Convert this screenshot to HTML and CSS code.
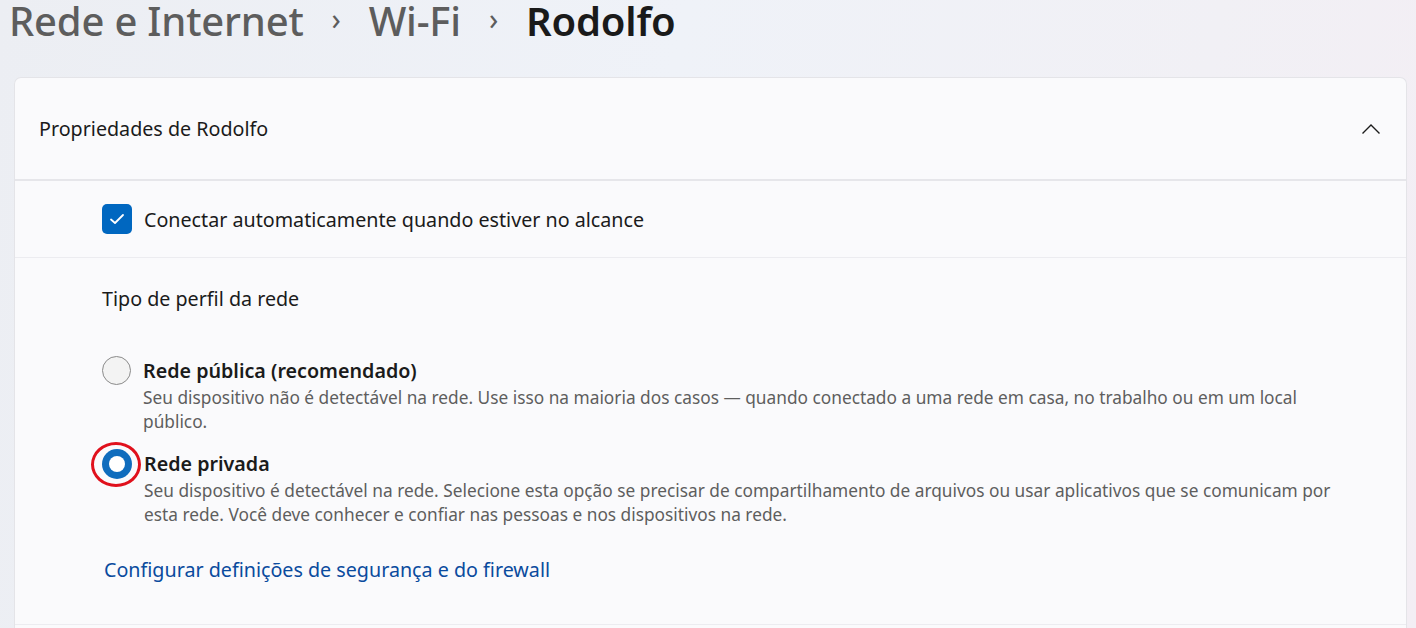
FILE: index.html
```html
<!DOCTYPE html>
<html lang="pt-BR">
<head>
    <meta charset="UTF-8">
    <title>Rodolfo</title>
    <link rel="stylesheet" href="styles.css">
</head>
<body>
    <h1 class="crumbs">
        <span class="crumb">Rede e Internet</span>
        <span class="sep">&#8250;</span>
        <span class="crumb">Wi-Fi</span>
        <span class="sep">&#8250;</span>
        <span class="crumb current">Rodolfo</span>
    </h1>
    <div class="card">
        <div class="card-header">
            <span>Propriedades de Rodolfo</span>
            <svg class="chevron" width="20" height="12" viewBox="0 0 20 12">
                <path d="M1.5 10.5 L10 2 L18.5 10.5" fill="none" stroke="#1b1b1b" stroke-width="1.4"/>
            </svg>
        </div>
        <div class="row">
            <label class="check">
                <span class="box">
                    <svg width="16" height="12" viewBox="0 0 16 12">
                        <path d="M2 6.5 L6 10 L14 2" fill="none" stroke="#fff" stroke-width="1.8" stroke-linecap="round" stroke-linejoin="round"/>
                    </svg>
                </span>
                Conectar automaticamente quando estiver no alcance
            </label>
        </div>
        <div class="row profile">
            <div class="section-title">Tipo de perfil da rede</div>
            <div class="option">
                <span class="radio"></span>
                <div class="option-text">
                    <div class="option-label">Rede pública (recomendado)</div>
                    <div class="option-desc">Seu dispositivo não é detectável na rede. Use isso na maioria dos casos — quando conectado a uma rede em casa, no trabalho ou em um local público.</div>
                </div>
            </div>
            <div class="option">
                <span class="radio checked"><span class="mark"></span></span>
                <div class="option-text">
                    <div class="option-label">Rede privada</div>
                    <div class="option-desc">Seu dispositivo é detectável na rede. Selecione esta opção se precisar de compartilhamento de arquivos ou usar aplicativos que se comunicam por esta rede. Você deve conhecer e confiar nas pessoas e nos dispositivos na rede.</div>
                </div>
            </div>
            <a class="link" href="#">Configurar definições de segurança e do firewall</a>
        </div>
    </div>
</body>
</html>
```

FILE: styles.css
```css
body {
    margin: 0;
    height: 628px;
    overflow: hidden;
    font-family: "Noto Sans", "Open Sans", sans-serif;
    color: #1b1b1b;
    background: linear-gradient(100deg, #eceef3 0%, #eff2f8 45%, #f1f0f5 80%, #f3eef4 100%);
}
.crumbs {
    margin: 0;
    padding: 0 0 0 9px;
    height: 77px;
    display: flex;
    align-items: flex-start;
    font-size: 40px;
    font-weight: 500;
    line-height: 42px;
    color: #5d5d5d;
    letter-spacing: -0.2px;
}
.crumbs .sep {
    font-size: 30px;
    font-weight: 400;
    color: #5d5d5d;
    margin: -2px 28px 0 28px;
}
.crumbs .current {
    color: #1a1a1a;
    font-weight: 600;
}
.card {
    margin: 0 9px 0 14px;
    background: #fafafc;
    border: 1px solid #e4e4e8;
    border-bottom: none;
    border-radius: 7px 7px 0 0;
    height: 560px;
}
.card-header {
    height: 101px;
    padding: 0 25px 0 24px;
    display: flex;
    align-items: center;
    justify-content: space-between;
    font-size: 19.7px;
    border-bottom: 2px solid #e6e6ea;
}
.row {
    padding: 0 50px 0 87px;
    border-bottom: 1px solid #ececf0;
}
.check {
    height: 76px;
    display: flex;
    align-items: center;
    gap: 12px;
    font-size: 19.7px;
}
.box {
    width: 30px;
    height: 30px;
    border-radius: 5px;
    background: #0067c0;
    display: flex;
    align-items: center;
    justify-content: center;
}
.profile {
    height: 367px;
    box-sizing: border-box;
    padding-top: 27px;
}
.section-title {
    font-size: 19.7px;
    margin-bottom: 44px;
}
.option {
    display: flex;
    gap: 12px;
    align-items: flex-start;
    margin-bottom: 15px;
}
.radio {
    position: relative;
    width: 27px;
    height: 27px;
    flex: none;
    border: 1.5px solid #8a8a8a;
    border-radius: 50%;
    background: #f3f3f3;
}
.radio.checked {
    border: none;
    width: 30px;
    height: 30px;
    background: #0f6cbd;
    display: flex;
    align-items: center;
    justify-content: center;
}
.radio.checked .mark {
    width: 16px;
    height: 16px;
    border-radius: 50%;
    background: #fff;
}
.radio.checked::after {
    content: "";
    position: absolute;
    left: -11px;
    top: -7px;
    width: 44px;
    height: 39px;
    border: 3px solid #e0101c;
    border-radius: 50%;
}
.option-label {
    font-size: 19.7px;
    font-weight: 600;
    line-height: 30px;
}
.option-desc {
    font-size: 17.3px;
    line-height: 24px;
    color: #5e5e5e;
}
.link {
    display: inline-block;
    margin-top: 14px;
    margin-left: 2px;
    font-size: 19.7px;
    color: #0a4b9e;
    text-decoration: none;
}
```
